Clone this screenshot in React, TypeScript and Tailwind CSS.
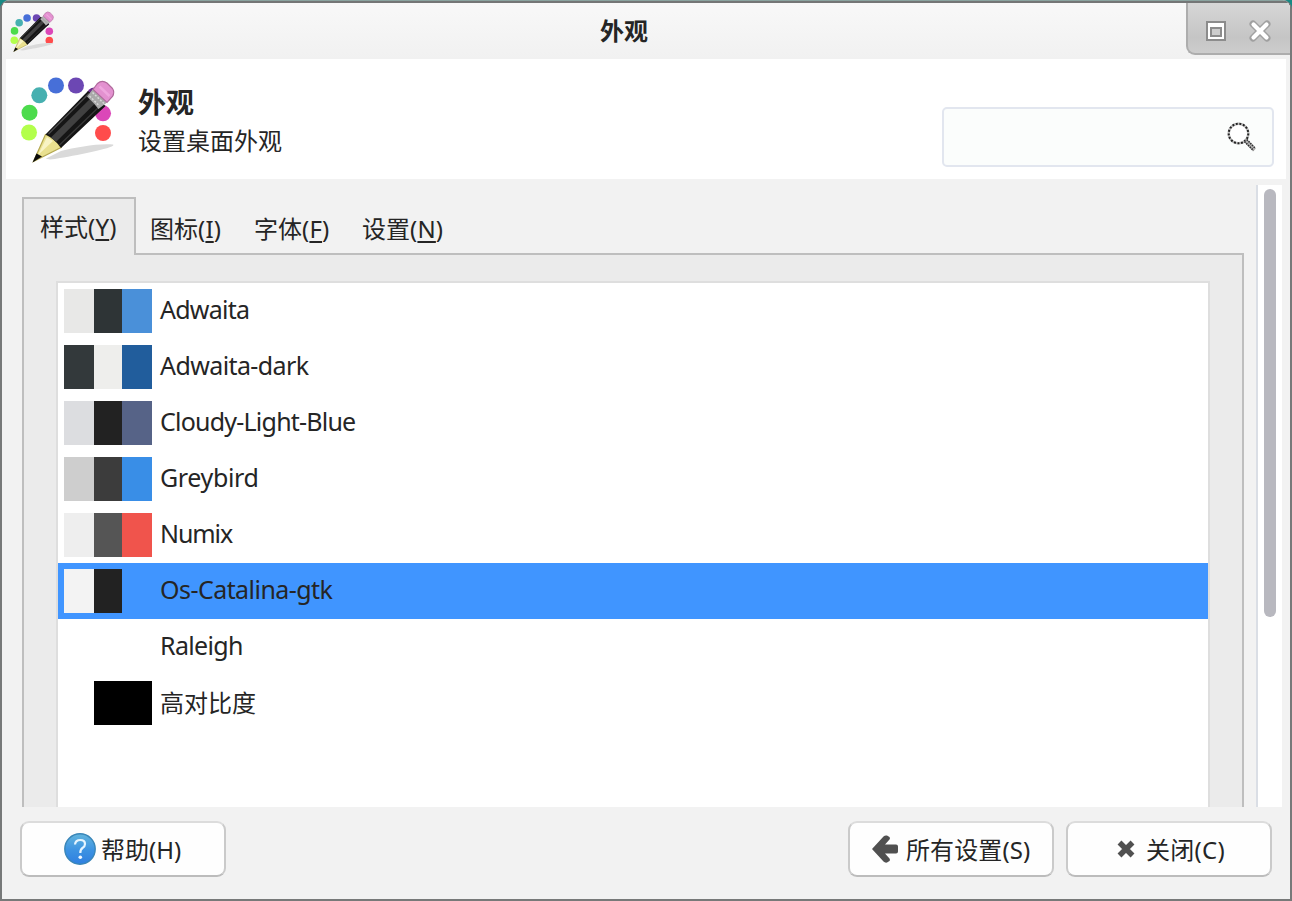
import React from 'react';

const DOTS: [number, number, string][] = [
  [29, 132.5, '#b3ff4c'],
  [29.5, 112.7, '#4cdb4c'],
  [39.3, 95.3, '#47b0b0'],
  [56, 85.5, '#476fd8'],
  [76, 85.5, '#6c47b3'],
  [94.5, 95.5, '#6c2f8c'],
  [103, 113.3, '#db47b8'],
  [103, 133, '#ff4c4c'],
];

function Dots() {
  return (
    <g>
      {DOTS.map(([x, y, color]) => (
        <circle key={color} cx={x} cy={y} r={8} fill={color} />
      ))}
    </g>
  );
}

function Pencil() {
  return (
    <g>
      <path d="M46 158.500 L61 151 C76 147 100 143 113 144.500 C118 147 80 155 60 158 C54 159.500 48 160 46 158.500Z" fill="#dadada" />
      <path d="M33.500 161.500 L45.500 134.500 Q54 137 61 147.500Z" fill="#e9e08f" stroke="#b3a750" strokeWidth="1.200" />
      <path d="M38 155 L47 137 L53 141Z" fill="#f8f3c4" />
      <path d="M32.500 162.500 L36.500 153.500 L42 156.500Z" fill="#0a0a0a" />
      <path d="M45.500 134.500 L88 91 L105.500 106 L61 148 Q55 139 45.500 134.500Z" fill="#151515" />
      <path d="M51 137.500 L92 97 L97 101.500 L56 142Z" fill="#414141" />
      <path d="M48.500 134 L89 93.500" stroke="#4d4d4d" strokeWidth="1.200" />
      <path d="M59.500 145 L102 104" stroke="#3a3a3a" strokeWidth="1.200" />
      <path d="M87 96.500 L93 89 L107 102.500 L98.500 109 Q94 103 87 96.500Z" fill="#a9a9a9" />
      <path d="M89.500 96 L99.500 106 M92.500 92.500 L104 103.500" stroke="#d8d8d8" strokeWidth="1.500" strokeDasharray="2 1.500" />
      <path d="M93 89.500 L97.500 83.500 Q102 79.500 107 83 L112.500 88.500 Q115 92 112.500 96.500 L107 102.500Z" fill="#e391d0" stroke="#b06a9c" strokeWidth="1.200" />
      <path d="M99.500 86.500 L109.500 96" stroke="#eea6de" strokeWidth="2.500" />
    </g>
  );
}

function AppearanceIcon() {
  return (
    <svg className="block shrink-0" width="98" height="90" viewBox="20 76 98 90">
      <Dots />
      <Pencil />
    </svg>
  );
}

function AppearanceIconSmall() {
  return (
    <svg className="block shrink-0" width="46" height="44" viewBox="10 10 46 44">
      <g transform="translate(.58 -22.400) scale(.473)">
        <Dots />
      </g>
      <g transform="translate(-2.650 -28.200) scale(.493)">
        <Pencil />
      </g>
    </svg>
  );
}

function TitleBar() {
  return (
    <div className="flex h-14 bg-linear-to-b from-[#f8f8f8] to-[#f1f1f1]">
      <div className="w-[560px] pl-2 pt-[7px]">
        <AppearanceIconSmall />
      </div>
      <div className="flex-1 pl-[38px] pt-3 text-[24px] leading-8 font-bold">外观</div>
      <div className="flex h-[52px] w-[104px] shrink-0 rounded-bl-[9px] border-b-2 border-l-2 border-[#adadad] bg-linear-to-b from-[#d6d6d6] via-[#c5c5c5] via-70% to-[#cdcdcd] pl-[18px] pt-[18px]">
        <svg className="block" width="20" height="20" viewBox="0 0 20 20">
          <rect x="1" y="1" width="18" height="18" fill="#fff" stroke="#8c8c8c" strokeWidth="2" />
          <rect x="5" y="7" width="10" height="8" fill="#cdcdcd" stroke="#8c8c8c" strokeWidth="2" />
        </svg>
        <svg className="-mt-0.5 ml-[22px] block" width="24" height="24" viewBox="0 0 24 24">
          <path d="M5 5 L19 19 M19 5 L5 19" stroke="#a0a0a0" strokeWidth="7" strokeLinecap="round" />
          <path d="M5.500 5.500 L18.500 18.500 M18.500 5.500 L5.500 18.500" stroke="#fff" strokeWidth="4.200" strokeLinecap="round" />
        </svg>
      </div>
    </div>
  );
}

function Header() {
  return (
    <header className="mx-1 flex h-[120px] bg-white pl-[14px] pt-[17px]">
      <AppearanceIcon />
      <div className="flex-1 pl-5 pt-1.5">
        <h1 className="text-[28px] leading-10 font-bold">外观</h1>
        <p className="pt-px text-[24px] leading-9">设置桌面外观</p>
      </div>
      <div className="mr-3 mt-[31px] flex h-[60px] w-[332px] justify-end rounded-[5px] border-2 border-[#e2e6ef] bg-[#fbfdfc] pr-[14px] pt-[13px]">
        <svg className="block" width="32" height="32" viewBox="0 0 32 32">
          <circle cx="12.500" cy="11.500" r="9.800" fill="#fff" stroke="#bdbdbd" strokeWidth="2.400" />
          <circle cx="12.500" cy="11.500" r="9.800" fill="none" stroke="#222" strokeWidth="2" strokeDasharray="1.900 1.700" />
          <path d="M19.500 18.500 L28.500 28" stroke="#b0b0b0" strokeWidth="4" />
          <path d="M20.800 17.500 L29.500 26.500 M18.500 19.500 L27.500 28.500" stroke="#2e2e2e" strokeWidth="1.600" strokeDasharray="1.500 1" />
        </svg>
      </div>
    </header>
  );
}

function Mnemonic({ letter }: { letter: string }) {
  return (
    <span className="tracking-[0.2px]">
      (<span className="underline decoration-2 underline-offset-[3px]">{letter}</span>)
    </span>
  );
}

function TabBar() {
  return (
    <div className="flex h-14 text-[24px] leading-8 whitespace-nowrap">
      <div className="relative -mr-0.5 h-[58px] w-[114px] shrink-0 border-x-2 border-t-2 border-[#bebebe] bg-[#ebebeb] pl-4 pt-3">
        样式<Mnemonic letter="Y" />
      </div>
      <div className="w-[105px] pl-4 pt-4">图标<Mnemonic letter="I" /></div>
      <div className="w-[108px] pl-[15px] pt-4">字体<Mnemonic letter="F" /></div>
      <div className="pl-[15px] pt-4">设置<Mnemonic letter="N" /></div>
    </div>
  );
}

type Theme = { name: string; a: string; b: string; c: string; label: string; selected?: boolean };

const THEMES: Theme[] = [
  { name: 'Adwaita', a: 'bg-[#e8e8e7]', b: 'bg-[#2e3436]', c: 'bg-[#4a90d9]', label: 'text-[25px] pb-1 tracking-[-0.75px]' },
  { name: 'Adwaita-dark', a: 'bg-[#33393b]', b: 'bg-[#eeeeec]', c: 'bg-[#215d9c]', label: 'text-[25px] pb-1 tracking-[-0.6px]' },
  { name: 'Cloudy-Light-Blue', a: 'bg-[#dcdde0]', b: 'bg-[#222222]', c: 'bg-[#566387]', label: 'text-[25px] pb-1 tracking-[-0.78px]' },
  { name: 'Greybird', a: 'bg-[#cecece]', b: 'bg-[#3c3c3c]', c: 'bg-[#398ee7]', label: 'text-[25px] pb-1 tracking-[-0.35px]' },
  { name: 'Numix', a: 'bg-[#eeeeee]', b: 'bg-[#555555]', c: 'bg-[#f0544c]', label: 'text-[25px] pb-1 tracking-[-1.1px]' },
  { name: 'Os-Catalina-gtk', a: 'bg-[#f3f3f3]', b: 'bg-[#222222]', c: 'bg-[#4095ff]', label: 'text-[25px] pb-1 tracking-[-0.55px]', selected: true },
  { name: 'Raleigh', a: 'bg-white', b: 'bg-white', c: 'bg-white', label: 'text-[25px] pb-1 tracking-[-0.65px]' },
  { name: '高对比度', a: 'bg-white', b: 'bg-black', c: 'bg-black', label: 'text-[24px]' },
];

function ThemeRow({ theme }: { theme: Theme }) {
  return (
    <li className={`flex h-14 items-center pl-1.5 ${theme.selected ? 'bg-[#4095ff]' : ''}`}>
      <span className={`h-11 w-[30px] ${theme.a}`} />
      <span className={`h-11 w-7 ${theme.b}`} />
      <span className={`h-11 w-[30px] ${theme.c}`} />
      <span className={`ml-2 leading-8 whitespace-nowrap ${theme.label}`}>{theme.name}</span>
    </li>
  );
}

function Button({ pad, children }: { pad: string; children: React.ReactNode }) {
  return (
    <button
      className={`flex h-[56px] w-[206px] items-center rounded-[9px] border-2 border-[#cacaca] border-t-[#dcdcdc] border-b-[#bcbcbc] bg-[#fefefe] text-[24px] leading-8 whitespace-nowrap ${pad}`}
    >
      {children}
    </button>
  );
}

function Footer() {
  return (
    <footer className="flex pl-[18px] pt-[14px]">
      <Button pad="pl-[42px]">
        <svg className="block" width="32" height="34" viewBox="0 0 32 34">
          <defs>
            <linearGradient id="help" x1="0" y1="0" x2="0" y2="1">
              <stop offset="0" stopColor="#63b5dd" />
              <stop offset=".55" stopColor="#3c92e2" />
              <stop offset="1" stopColor="#2f7fe0" />
            </linearGradient>
          </defs>
          <circle cx="16" cy="17" r="15.200" fill="url(#help)" stroke="#3a86b8" strokeWidth="1.400" />
          <path d="M11 12.500 Q11.500 8 16.300 8 Q21 8 21 12 Q21 14.500 18.500 16 Q16.300 17.500 16.300 21" fill="none" stroke="#e6f5ff" strokeWidth="2.200" />
          <circle cx="16.300" cy="25.200" r="1.800" fill="#f2faff" />
        </svg>
        <span className="ml-[5px] pt-0.5">帮助(H)</span>
      </Button>
      <div className="flex-1" />
      <Button pad="pl-[22px]">
        <svg className="block" width="27" height="28" viewBox="0 0 27 28">
          <path d="M0 14 L11.500 1.500 Q13 0 15 .5 L17.500 2 Q18.500 3 17.500 4.500 L13 9.500 H24 Q26 9.500 26 11.500 V16.500 Q26 18.500 24 18.500 H13 L17.500 23.500 Q18.500 25 17.500 26 L15 27.500 Q13 28 11.500 26.500Z" fill="#505050" />
        </svg>
        <span className="ml-[7px] pt-0.5 tracking-[0.1px]">所有设置(S)</span>
      </Button>
      <div className="w-3" />
      <Button pad="pl-[49px]">
        <svg className="block" width="18" height="18" viewBox="0 0 18 18">
          <path d="M2.500 2.500 L15.500 15.500 M15.500 2.500 L2.500 15.500" stroke="#505050" strokeWidth="5.500" />
        </svg>
        <span className="ml-[11px] pt-0.5 tracking-[0.3px]">关闭(C)</span>
      </Button>
      <div className="w-[18px]" />
    </footer>
  );
}

export default function App() {
  return (
    <div className="h-[901px] w-[1292px] overflow-hidden bg-[#178a85]">
      <div className="flex h-full flex-col overflow-hidden rounded-t-[9px] border-x-2 border-b-2 border-[#777979] bg-[#f2f2f2] font-['Noto_Sans','Noto_Sans_CJK_SC',sans-serif] text-[#252525]">
        <div className="h-px shrink-0 bg-[#8aa39f]" />
        <div className="h-0.5 shrink-0 bg-[#747676]" />
        <TitleBar />
        <Header />
        <main className="flex h-[628px] shrink-0 overflow-hidden pt-1.5">
          <section className="ml-5 w-[1222px] shrink-0 pt-3">
            <TabBar />
            <div className="h-[640px] border-2 border-[#bebebe] bg-[#ebebeb] px-8 pt-[26px]">
              <ul className="h-full border-2 border-[#dedede] bg-white">
                {THEMES.map((t) => (
                  <ThemeRow key={t.name} theme={t} />
                ))}
              </ul>
            </div>
          </section>
          <div className="ml-3 w-[26px] shrink-0 border-l-2 border-[#dadee5] bg-white pl-1.5 pt-1">
            <div className="h-[428px] w-3 rounded-full bg-[#b8b8bf]" />
          </div>
        </main>
        <Footer />
      </div>
    </div>
  );
}
